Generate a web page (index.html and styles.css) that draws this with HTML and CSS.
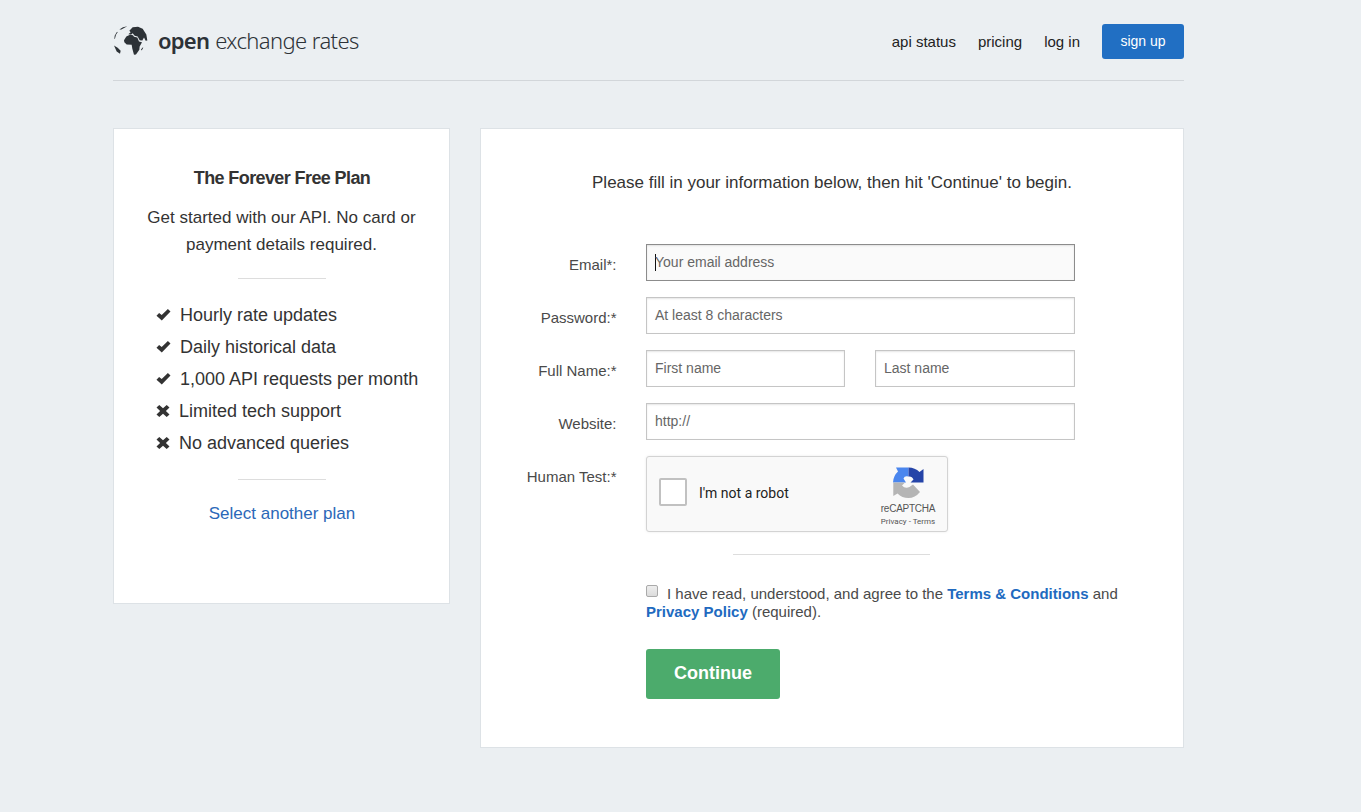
FILE: index.html
```html
<!DOCTYPE html>
<html lang="en">
<head>
<meta charset="utf-8">
<title>Sign up - Open Exchange Rates</title>
<link rel="stylesheet" href="styles.css">
</head>
<body>
<svg class="sprite" aria-hidden="true">
  <symbol id="check" viewBox="0 0 14 12"><path d="M0 6.7 2.6 3.9 5.2 6 11.4 0 14 2.6 5.3 11.6Z"/></symbol>
  <symbol id="cross" viewBox="0 0 13 12"><path d="M0 2.6 2.8 0 6.5 3.2 10.2 0 13 2.6 9.4 6 13 9.4 10.2 12 6.5 8.8 2.8 12 0 9.4 3.6 6Z"/></symbol>
</svg>
<div class="page">
  <header class="header">
    <a class="logo">
      <svg class="globe" viewBox="24 30 105 92"><path d="M57 75 64 64 75 59 84 60 87 65 97 67 102 79 111 81 104 94 103 104 93 118 87 119 82 101 80 89 65 88 58 81ZM73 47 83 36 99 35 113 41 124 58 127 76 122 77 117 67 112 76 104 75 98 64 89 62 83 54 79 58 70 57 77 51ZM27 91 38 98 47 107 45 116 35 109ZM43 43 54 36 67 33 60 37 49 43ZM29 62 36 50 38 51 33 59 30 70 28 72ZM113 97 115 98 110 106 108 103Z"/></svg>
      <span class="brand"><b>open</b><span>exchange rates</span></span>
    </a>
    <nav class="nav"><a>api status</a><a>pricing</a><a>log in</a><a class="signup">sign up</a></nav>
  </header>
  <main class="columns">
    <aside class="card plan">
      <h1>The Forever Free Plan</h1>
      <p>Get started with our API. No card or<br>payment details required.</p>
      <hr>
      <ul>
        <li><svg class="check"><use href="#check"/></svg><span>Hourly rate updates</span></li>
        <li><svg class="check"><use href="#check"/></svg><span>Daily historical data</span></li>
        <li><svg class="check"><use href="#check"/></svg><span>1,000 API requests per month</span></li>
        <li><svg class="cross"><use href="#cross"/></svg><span>Limited tech support</span></li>
        <li><svg class="cross"><use href="#cross"/></svg><span>No advanced queries</span></li>
      </ul>
      <hr>
      <a class="another">Select another plan</a>
    </aside>
    <section class="card signup-card">
      <p class="intro"><span>Please fill in your information below, then hit 'Continue' to begin.</span></p>
      <form class="form">
        <label>Email*:</label><div class="field focused"><i class="caret"></i><span>Your email address</span></div>
        <label>Password:*</label><div class="field"><span>At least 8 characters</span></div>
        <label>Full Name:*</label><div class="names"><div class="field"><span>First name</span></div><div class="field"><span>Last name</span></div></div>
        <label>Website:</label><div class="field"><span>http://</span></div>
        <label>Human Test:*</label>
        <div class="captcha">
          <span class="box"></span><span class="robot">I'm not a robot</span>
          <div class="badge">
            <svg viewBox="0 0 31 31"><path fill="#4a86ee" d="M0 15.5A15.5 15.5 0 0 1 5 4.5L3 .5H15.5V9.5Q11.500 8.500 10.500 11.500L13 15.500Z"/><path fill="#2544a8" d="M15.5.5Q22 .5 26.5 5L30.500 2V15.5H17.500L20.500 12.500Q19 9 15.5 9.5Z"/><path fill="#b5b5b5" d="M.3 15.5H12L9 18.500Q12 22 16.500 20L20 17.500 27 25Q22 31 15.5 31 9 31 4.5 26.5L.3 29Z"/></svg>
            <span class="recaptcha">reCAPTCHA</span><span class="legal">Privacy - Terms</span>
          </div>
        </div>
      </form>
      <hr>
      <div class="agreement">
        <p><i class="checkbox"></i><span class="line">I have read, understood, and agree to the <b>Terms &amp; Conditions</b> and</span><br><b>Privacy Policy</b> (required).</p>
        <button type="button">Continue</button>
      </div>
    </section>
  </main>
</div>
</body>
</html>
```
FILE: styles.css
```css
* { box-sizing: border-box; }
body { margin: 0; background: #ebeff2; color: #333; font-family: "Liberation Sans", Arial, sans-serif; }
.sprite { display: none; }
.page { width: 1071px; margin-left: 113px; }
.header { height: 81px; display: flex; align-items: flex-start; justify-content: space-between; border-bottom: 1px solid #d2d6da; }
.logo { display: flex; padding-top: 25px; gap: 10px; }
.globe { width: 35px; height: 31px; fill: #2d3237; }
.brand { display: flex; gap: 6px; font: 300 22px/31px "Noto Sans", sans-serif; color: #2d3237; letter-spacing: -.6px; }
.brand b { font-weight: 600; letter-spacing: -.75px; }
.nav { display: flex; align-items: center; gap: 22px; padding-top: 24px; font-size: 15px; line-height: 35px; color: #222; }
.nav .signup { font-size: 14px; width: 82px; height: 35px; border-radius: 3px; background: #216fc3; color: #fff; text-align: center; }
.columns { display: flex; align-items: flex-start; gap: 30px; padding-top: 47px; }
.card { background: #fff; border: 1px solid #dde2e6; }
.plan { width: 337px; height: 476px; padding-top: 38px; text-align: center; }
.plan h1 { margin: 0; font-size: 18px; line-height: 22px; letter-spacing: -.6px; padding-left: 1px; }
.plan p { margin: 15px 0 20px; font-size: 17px; line-height: 27px; }
.plan hr { margin: 0 0 0 124px; }
hr { width: 88px; height: 1px; border: 0; margin: 0 auto; background: #ddd; }
.plan ul { list-style: none; margin: 20px 0; padding: 0 0 0 42px; text-align: left; font-size: 18px; line-height: 32px; }
.plan li { display: flex; align-items: center; }
.plan li svg { fill: #333; margin-right: 9px; }
.check { width: 15px; height: 12px; }
.cross { width: 14px; height: 12px; }
.another { display: block; margin-top: 22px; font-size: 17px; line-height: 24px; color: #2b68b8; padding-left: 1px; }
.signup-card { width: 704px; height: 620px; padding-top: 42px; }
.intro { margin: 0 0 49px; text-align: center; font-size: 17px; line-height: 24px; }
.form { display: grid; grid-template-columns: 135.5px 429px; column-gap: 29.5px; row-gap: 16px; }
.form label { text-align: right; font-size: 15px; line-height: 18px; padding-top: 12px; color: #4a4a4a; }
.field { height: 37px; border: 1px solid #c5c5c5; padding: 0 8px; font-size: 14px; line-height: 34px; color: #666; box-shadow: inset 0 1px 2px rgba(0,0,0,.1); white-space: nowrap; }
.focused { display: flex; background: #fafafa; border-color: #8c8c8c; }
.caret { width: 1px; height: 17px; margin: 9px -1px 0 0; background: #111; }
.names { display: grid; grid-template-columns: 199px 200px; gap: 30px; }
.captcha { display: flex; align-items: center; width: 302px; height: 76px; padding: 0 12px; background: #f9f9f9; border: 1px solid #d3d3d3; border-radius: 3px; box-shadow: 0 0 3px rgba(0,0,0,.08); font-family: Roboto, sans-serif; color: #222; }
.box { width: 28px; height: 28px; margin-top: -4px; border: 2px solid #c1c1c1; border-radius: 2px; background: #fff; }
.robot { margin: -2px 0 0 12px; font-size: 14px; }
.badge { width: 56px; height: 58px; margin-left: auto; display: flex; flex-direction: column; align-items: center; color: #555; margin-top: 4px; white-space: nowrap; margin-right: -1px; }
.badge svg { width: 31px; height: 31px; flex: none; }
.recaptcha { font-size: 10px; line-height: 12px; margin-top: 5px; font-family: "Liberation Sans", Arial, sans-serif; letter-spacing: -.25px; }
.legal { font-size: 8px; line-height: 10px; margin-top: 2px; }
.signup-card hr { width: 197px; margin: 22px 0 0 252px; }
.agreement { margin: 30px 0 0 165px; color: #4a4a4a; }
.agreement p { margin: 0 0 28px; font-size: 15px; line-height: 18px; white-space: nowrap; }
.agreement b { color: #216abf; }
.checkbox { display: inline-block; width: 12px; height: 12px; margin-right: 9px; vertical-align: 2px; margin-top: -1px; border: 1px solid #aaa; border-radius: 2px; background: linear-gradient(#eee, #dcdcdc); }
button { display: block; width: 134px; height: 50px; padding: 0 0 2px; border: 0; border-radius: 3px; background: #4cab6c; color: #fff; font: bold 18px/48px "Liberation Sans", Arial, sans-serif; }
```
